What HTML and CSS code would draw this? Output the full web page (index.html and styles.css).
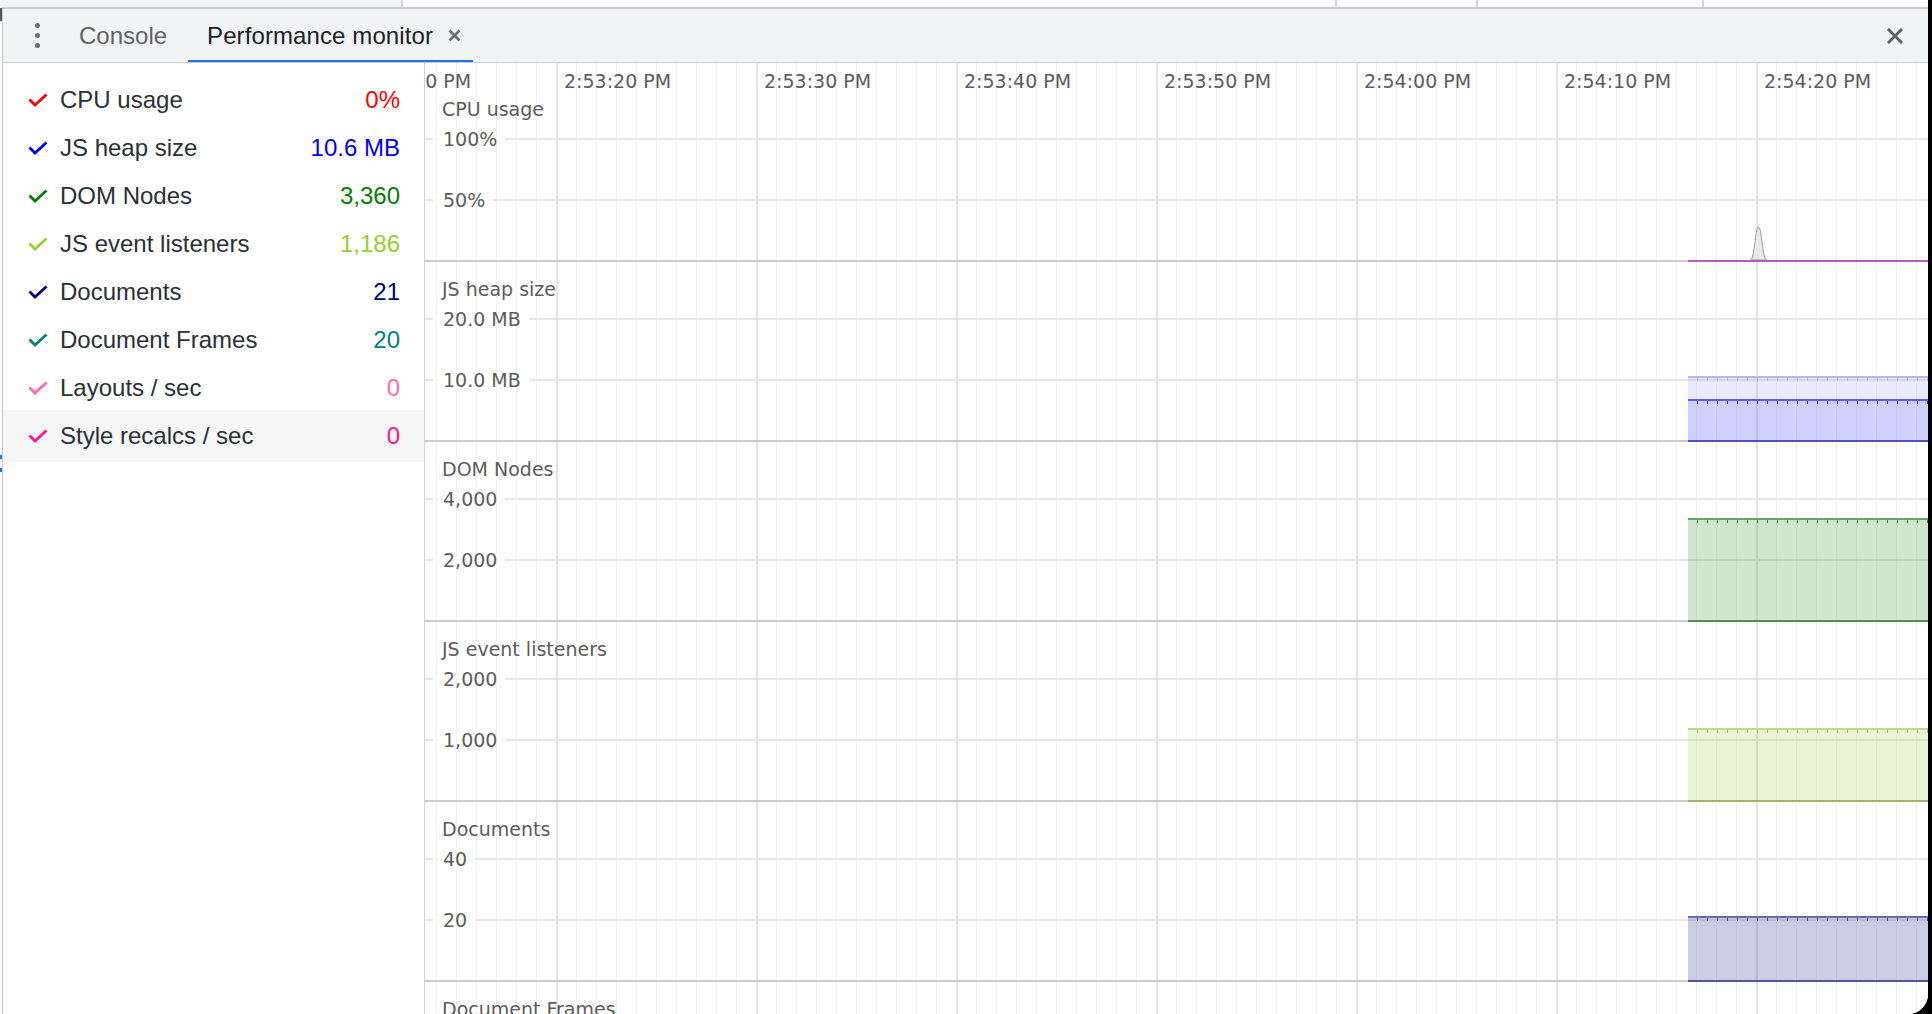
FILE: index.html
```html
<!DOCTYPE html>
<html>
<head>
<meta charset="utf-8">
<title>Performance monitor</title>
<link rel="stylesheet" href="styles.css">
</head>
<body>
<div class="app">
  <div class="topstrip">
    <div class="ts-left"></div>
    <div class="ts-seg ts-a"></div>
    <div class="ts-seg ts-b"></div>
    <div class="ts-seg ts-c"></div>
    <div class="ts-rest"></div>
  </div>
  <div class="main">
    <div class="edge"><div class="edge-mark"></div><div class="edge-blue b1"></div><div class="edge-blue b2"></div></div>
    <div class="panel">
      <div class="toolbar">
        <div class="kebab"><span></span><span></span><span></span></div>
        <div class="tab-console">Console</div>
        <div class="tab-active">
          <span class="tab-text">Performance monitor</span>
          <svg class="tab-close" viewBox="0 0 13 13" width="13" height="13"><path d="M1.5 1.5 L11.5 11.5 M11.5 1.5 L1.5 11.5" /></svg>
        </div>
        <svg class="drawer-close" viewBox="0 0 18 18" width="18" height="18"><path d="M2 2 L16 16 M16 2 L2 16" /></svg>
      </div>
      <div class="content">
        <div class="metrics">
          <div class="row">
            <svg class="check" viewBox="0 0 20 14" width="20" height="14"><path d="M1.5 6.5 L7 12 L18.5 1.5" stroke="#ff0000"/></svg>
            <span class="label">CPU usage</span><span class="value v-cpu">0%</span>
          </div>
          <div class="row">
            <svg class="check" viewBox="0 0 20 14" width="20" height="14"><path d="M1.5 6.5 L7 12 L18.5 1.5" stroke="#0000ff"/></svg>
            <span class="label">JS heap size</span><span class="value v-heap">10.6 MB</span>
          </div>
          <div class="row">
            <svg class="check" viewBox="0 0 20 14" width="20" height="14"><path d="M1.5 6.5 L7 12 L18.5 1.5" stroke="#008000"/></svg>
            <span class="label">DOM Nodes</span><span class="value v-dom">3,360</span>
          </div>
          <div class="row">
            <svg class="check" viewBox="0 0 20 14" width="20" height="14"><path d="M1.5 6.5 L7 12 L18.5 1.5" stroke="#9acd32"/></svg>
            <span class="label">JS event listeners</span><span class="value v-listen">1,186</span>
          </div>
          <div class="row">
            <svg class="check" viewBox="0 0 20 14" width="20" height="14"><path d="M1.5 6.5 L7 12 L18.5 1.5" stroke="#000080"/></svg>
            <span class="label">Documents</span><span class="value v-docs">21</span>
          </div>
          <div class="row">
            <svg class="check" viewBox="0 0 20 14" width="20" height="14"><path d="M1.5 6.5 L7 12 L18.5 1.5" stroke="#008080"/></svg>
            <span class="label">Document Frames</span><span class="value v-frames">20</span>
          </div>
          <div class="row">
            <svg class="check" viewBox="0 0 20 14" width="20" height="14"><path d="M1.5 6.5 L7 12 L18.5 1.5" stroke="#ff69b4"/></svg>
            <span class="label">Layouts / sec</span><span class="value v-layouts">0</span>
          </div>
          <div class="row row-hover">
            <svg class="check" viewBox="0 0 20 14" width="20" height="14"><path d="M1.5 6.5 L7 12 L18.5 1.5" stroke="#ff1493"/></svg>
            <span class="label">Style recalcs / sec</span><span class="value v-style">0</span>
          </div>
        </div>
        <div class="chart">
          <div class="timehdr">
            <span class="tlabel">2:53:10 PM</span>
            <span class="tlabel">2:53:20 PM</span>
            <span class="tlabel">2:53:30 PM</span>
            <span class="tlabel">2:53:40 PM</span>
            <span class="tlabel">2:53:50 PM</span>
            <span class="tlabel">2:54:00 PM</span>
            <span class="tlabel">2:54:10 PM</span>
            <span class="tlabel">2:54:20 PM</span>
          </div>

          <div class="section">
            <div class="title">CPU usage</div>
            <div class="grow"><span class="stub"></span><span class="glabel">100%</span><span class="gline"></span></div>
            <div class="grow grow2"><span class="stub"></span><span class="glabel">50%</span><span class="gline"></span></div>
            <div class="cpuline"></div>
            <svg class="spike" viewBox="0 0 17 34" width="17" height="34"><path d="M0 34 C5 34 5 1 8.5 1 C12 1 12 34 17 34 Z" /></svg>
          </div>

          <div class="section">
            <div class="title">JS heap size</div>
            <div class="grow"><span class="stub"></span><span class="glabel">20.0 MB</span><span class="gline"></span></div>
            <div class="grow grow2"><span class="stub"></span><span class="glabel">10.0 MB</span><span class="gline"></span></div>
            <div class="fill heap-total" style="height:62px"></div>
            <div class="fill heap-used" style="height:39px"></div>
          </div>

          <div class="section">
            <div class="title">DOM Nodes</div>
            <div class="grow"><span class="stub"></span><span class="glabel">4,000</span><span class="gline"></span></div>
            <div class="grow grow2"><span class="stub"></span><span class="glabel">2,000</span><span class="gline"></span></div>
            <div class="fill dom" style="height:100px"></div>
          </div>

          <div class="section">
            <div class="title">JS event listeners</div>
            <div class="grow"><span class="stub"></span><span class="glabel">2,000</span><span class="gline"></span></div>
            <div class="grow grow2"><span class="stub"></span><span class="glabel">1,000</span><span class="gline"></span></div>
            <div class="fill listen" style="height:70px"></div>
          </div>

          <div class="section">
            <div class="title">Documents</div>
            <div class="grow"><span class="stub"></span><span class="glabel">40</span><span class="gline"></span></div>
            <div class="grow grow2"><span class="stub"></span><span class="glabel">20</span><span class="gline"></span></div>
            <div class="fill docs" style="height:62px"></div>
          </div>

          <div class="section">
            <div class="title">Document Frames</div>
            <div class="grow"><span class="stub"></span><span class="glabel">40</span><span class="gline"></span></div>
            <div class="grow grow2"><span class="stub"></span><span class="glabel">20</span><span class="gline"></span></div>
          </div>
        </div>
      </div>
    </div>
  </div>
</div>
</body>
</html>
```

FILE: styles.css
```css
html, body {
  margin: 0;
  padding: 0;
}
body {
  width: 1932px;
  height: 1014px;
  overflow: hidden;
  background: #000;
  font-family: "Liberation Sans", Arial, sans-serif;
}
.app {
  width: 1928px;
  height: 1014px;
  background: #fff;
  border-bottom-right-radius: 20px;
  overflow: hidden;
  display: flex;
  flex-direction: column;
}

/* top strip */
.topstrip {
  height: 7px;
  display: flex;
  flex-shrink: 0;
}
.ts-left {
  width: 401px;
  background: #f1f3f4;
  border-right: 2px solid #d3d5d9;
}
.ts-seg {
  background: #fff;
  border-right: 2px solid #d3d5d9;
}
.ts-a { width: 932px; }
.ts-b { width: 139px; }
.ts-c { width: 224px; }
.ts-rest { flex: 1; background: #fff; }

.main {
  flex: 1;
  display: flex;
  min-height: 0;
}
.edge {
  width: 2px;
  background: #fff;
  border-right: 1px solid #c6c9ce;
  display: flex;
  flex-direction: column;
}
.edge-mark {
  height: 13px;
  margin-top: 1px;
  background: #4b5563;
}
.edge-blue {
  height: 4px;
  background: #1a73e8;
}
.edge-blue.b1 { margin-top: 434px; }
.edge-blue.b2 { margin-top: 9px; }

.panel {
  flex: 1;
  display: flex;
  flex-direction: column;
  min-width: 0;
}

/* toolbar */
.toolbar {
  height: 53px;
  flex-shrink: 0;
  background: #f1f3f4;
  border-top: 2px solid #c9cbcf;
  border-bottom: 1px solid #c9cbcf;
  display: flex;
  align-items: center;
  font-size: 24px;
}
.kebab {
  width: 5px;
  margin-left: 32px;
  display: flex;
  flex-direction: column;
  gap: 5px;
}
.kebab span {
  width: 5px;
  height: 5px;
  border-radius: 50%;
  background: #6b6f75;
}
.tab-console {
  margin-left: 39px;
  color: #5f6368;
}
.tab-active {
  margin-left: 21px;
  align-self: stretch;
  box-sizing: border-box;
  padding: 2px 12px 0 19px;
  border-bottom: 2px solid #1a73e8;
  display: flex;
  align-items: center;
}
.tab-text {
  color: #202124;
  letter-spacing: 0.1px;
}
.tab-close {
  margin-left: 15px;
  fill: none;
  stroke: #6b6f75;
  stroke-width: 2.6;
}
.drawer-close {
  margin-left: auto;
  margin-right: 24px;
  fill: none;
  stroke: #5a5e63;
  stroke-width: 2.8;
}

/* content */
.content {
  flex: 1;
  display: flex;
  min-height: 0;
}
.metrics {
  width: 422px;
  flex-shrink: 0;
  border-right: 1px solid #cfd1d4;
  padding-top: 13px;
  box-sizing: border-box;
  font-size: 24px;
}
.row {
  height: 48px;
  display: flex;
  align-items: center;
  padding: 0 24px 0 25px;
}
.row-hover {
  background: #f6f6f7;
  height: 52px;
  margin-top: -2px;
}
.check {
  flex-shrink: 0;
  fill: none;
  stroke-width: 2.8;
  stroke-linecap: butt;
  stroke-linejoin: miter;
}
.label {
  margin-left: 12px;
  color: #2b3036;
}
.value {
  margin-left: auto;
}
.v-cpu { color: #ff0000; }
.v-heap { color: #0000ff; }
.v-dom { color: #008000; }
.v-listen { color: #9acd32; }
.v-docs { color: #000080; }
.v-frames { color: #008080; }
.v-layouts { color: #ff69b4; }
.v-style { color: #ff1493; }

/* chart */
.chart {
  flex: 1;
  min-width: 0;
  position: relative;
  overflow: hidden;
  font-family: "DejaVu Sans", Verdana, sans-serif;
  font-size: 19px;
  color: #5c5c5c;
  background-color: #fff;
  background-image:
    linear-gradient(to right, #e3e3e3 0 2px, transparent 2px),
    linear-gradient(to right, #f3f3f3 0 1px, transparent 1px);
  background-size: 200px 100%, 20px 100%;
  background-repeat: repeat-x, repeat-x;
  background-position: 131px 0, 11px 0;
}
.timehdr {
  height: 19px;
  display: flex;
  margin-left: -61px;
  white-space: nowrap;
}
.tlabel {
  width: 200px;
  flex-shrink: 0;
  line-height: 22px;
  margin-top: 7px;
  height: 22px;
}
.section {
  height: 178px;
  border-bottom: 2px solid #cbcbcb;
  position: relative;
}
.title {
  height: 46px;
  box-sizing: border-box;
  padding: 15px 0 0 17px;
  line-height: 24px;
}
.grow {
  height: 22px;
  display: flex;
  align-items: center;
  line-height: 22px;
}
.grow2 {
  margin-top: 39px;
}
.stub {
  width: 8px;
  height: 2px;
  background: #e6e6e6;
}
.glabel {
  padding: 0 8px 0 10px;
}
.gline {
  flex: 1;
  height: 2px;
  background: #e6e6e6;
}

/* data */
.cpuline {
  position: absolute;
  left: 1263px;
  right: 0;
  bottom: -2px;
  height: 0;
  border-bottom: 2px solid #b05cbc;
}
.spike {
  position: absolute;
  left: 1325px;
  bottom: 0;
  fill: #e9e9e9;
  stroke: #9a9a9a;
  stroke-width: 1;
}
.fill {
  position: absolute;
  left: 1263px;
  right: 0;
  bottom: -2px;
  border-top: 2px solid;
  border-bottom: 2px solid;
}
.fill::before {
  content: "";
  position: absolute;
  left: 0;
  right: 0;
  top: 0;
  height: 3px;
  background-image: repeating-linear-gradient(to right, transparent 0 9px, var(--tick) 9px 10px);
}
.heap-total {
  background: rgba(160, 160, 250, 0.22);
  border-top-color: #b5b5f5;
  border-bottom-color: transparent;
  --tick: #b0b0e8;
}
.heap-used {
  background: rgba(100, 100, 240, 0.2);
  border-top-color: #5b5bee;
  border-bottom-color: #4f4fc8;
  --tick: #3a3ab0;
}
.dom {
  background: rgba(80, 170, 80, 0.28);
  border-top-color: #66a366;
  border-bottom-color: #5a8c5a;
  --tick: #3f7a3f;
}
.listen {
  background: rgba(154, 205, 50, 0.2);
  border-top-color: #b9de8a;
  border-bottom-color: #9cb66f;
  --tick: #a0c870;
}
.docs {
  background: rgba(0, 0, 128, 0.2);
  border-top-color: #6a6aaa;
  border-bottom-color: #55559a;
  --tick: #44448a;
}
```
